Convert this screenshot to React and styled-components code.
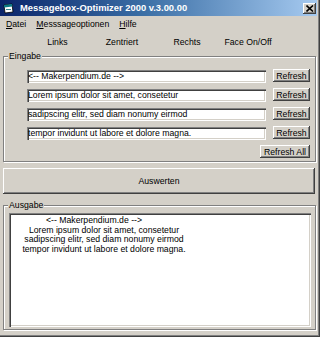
import { createGlobalStyle, styled } from "styled-components";

const GlobalStyle = createGlobalStyle`
  html, body {
    margin: 0;
    padding: 0;
    background: #d4d0c8;
  }
  body {
    font-family: "Liberation Sans", Arial, sans-serif;
    font-size: 8.7px;
    color: #000;
  }
`;

const Window = styled.div`
  position: relative;
  display: flex;
  flex-direction: column;
  box-sizing: border-box;
  width: 320px;
  height: 337px;
  padding: 0 3px 6px 0;
  background: #d4d0c8;
  box-shadow: inset -1px -1px 0 #404040, inset -2px -2px 0 #808080;
`;

const TitleBar = styled.div`
  display: flex;
  align-items: center;
  height: 16px;
  padding: 0 1px 0 3px;
  background: linear-gradient(to right, #0a246a 0%, #3a6ea5 45%, #a6caf0 100%);
`;

const Title = styled.span`
  flex: 1;
  margin-left: 5px;
  color: #fff;
  font-size: 9.4px;
  font-weight: 700;
  line-height: 16px;
  white-space: nowrap;
`;

const CloseButton = styled.div`
  display: flex;
  align-items: center;
  justify-content: center;
  box-sizing: border-box;
  width: 13px;
  height: 11px;
  background: #d4d0c8;
  box-shadow: inset -1px -1px 0 #404040, inset 1px 1px 0 #fff,
    inset -2px -2px 0 #808080;
`;

const MenuBar = styled.div`
  display: flex;
  height: 14px;
  margin-top: 1px;
  padding-left: 1px;
  align-items: center;
`;

const MenuItem = styled.span`
  padding: 0 5px;
  line-height: 14px;
  white-space: nowrap;
`;

const Body = styled.div`
  display: flex;
  flex: 1;
  flex-direction: column;
  padding-left: 3px;
`;

const AlignRow = styled.div`
  display: flex;
  height: 20px;
  margin-top: 1px;
  padding-left: 23px;
  align-items: center;
`;

const AlignOption = styled.span`
  width: ${(p) => p.$w}px;
  text-align: center;
  white-space: nowrap;
`;

const GroupBox = styled.div`
  position: relative;
  display: flex;
  flex-direction: column;
  box-sizing: border-box;
  border: 1px solid #808080;
  box-shadow: 1px 1px 0 #fff, inset 1px 1px 0 #fff;
  margin-top: ${(p) => p.$top}px;
  margin-right: 1px;
  padding: ${(p) => p.$pad};
  ${(p) => p.$grow && "flex: 1; margin-bottom: 1px;"}
`;

const Legend = styled.span`
  position: absolute;
  top: -6px;
  left: 4px;
  padding: 0 1px;
  background: #d4d0c8;
  line-height: 11px;
`;

const InputGrid = styled.div`
  display: grid;
  grid-template-columns: 1fr 37px;
  grid-auto-rows: 13px;
  column-gap: 7px;
  row-gap: 6px;
  align-items: center;
`;

const TextField = styled.div`
  box-sizing: border-box;
  height: 13px;
  margin-top: 2px;
  padding-left: 1px;
  background: #fff;
  box-shadow: inset 1px 1px 0 #808080, inset 2px 2px 0 #404040,
    inset -1px -1px 0 #fff, inset -2px -2px 0 #d4d0c8;
  padding-top: 2px;
  line-height: 9px;
  white-space: nowrap;
  overflow: hidden;
`;

const Button = styled.div`
  display: flex;
  align-items: center;
  justify-content: center;
  box-sizing: border-box;
  height: ${(p) => p.$h || 13}px;
  width: ${(p) => (p.$w ? `${p.$w}px` : "auto")};
  background: #d4d0c8;
  box-shadow: inset -1px -1px 0 #404040, inset 1px 1px 0 #fff,
    inset -2px -2px 0 #808080;
  white-space: nowrap;
  ${(p) => p.$span && "grid-column: 1 / -1; justify-self: end;"}
`;

const BigButton = styled(Button)`
  margin: 6px 2px 0 0;
`;

const OutputBox = styled.div`
  flex: 1;
  box-sizing: border-box;
  padding: 3px 2px 2px 7px;
  background: #fff;
  box-shadow: inset 1px 1px 0 #808080, inset 2px 2px 0 #404040,
    inset -1px -1px 0 #fff, inset -2px -2px 0 #d4d0c8;
`;

const OutputText = styled.div`
  width: 176px;
  text-align: center;
  line-height: 9.6px;
`;

const OutputLine = styled.div`
  padding-right: ${(p) => p.$shift || 0}px;
  white-space: nowrap;
`;

const AppIcon = () => (
  <svg width="12" height="11" viewBox="0 0 12 11">
    <path d="M1 2 L9 1 L10 9 L2 10 Z" fill="#fff" stroke="#000" strokeWidth="0.8" />
    <path d="M1 2 L9 1 L9.3 3.4 L1.3 4.4 Z" fill="#0a7a86" />
    <rect x="3" y="6" width="5" height="1" fill="#3a8a96" />
  </svg>
);

const CloseIcon = () => (
  <svg width="8" height="7" viewBox="0 0 8 7">
    <path d="M0.5 0.5 L7 6.5 M7 0.5 L0.5 6.5" stroke="#000" strokeWidth="1.6" />
  </svg>
);

const inputs = [
  "<-- Makerpendium.de -->",
  "Lorem ipsum dolor sit amet, consetetur",
  "sadipscing elitr, sed diam nonumy eirmod",
  "tempor invidunt ut labore et dolore magna.",
];

const alignOptions = [
  { label: "Links", w: 63 },
  { label: "Zentriert", w: 66 },
  { label: "Rechts", w: 64 },
  { label: "Face On/Off", w: 58 },
];

export default function App() {
  return (
    <>
      <GlobalStyle />
      <Window>
        <TitleBar>
          <AppIcon />
          <Title>Messagebox-Optimizer 2000 v.3.00.00</Title>
          <CloseButton>
            <CloseIcon />
          </CloseButton>
        </TitleBar>
        <MenuBar>
          <MenuItem>
            <u>D</u>atei
          </MenuItem>
          <MenuItem>
            <u>M</u>esssageoptionen
          </MenuItem>
          <MenuItem>
            <u>H</u>ilfe
          </MenuItem>
        </MenuBar>
        <Body>
          <AlignRow>
            {alignOptions.map((o) => (
              <AlignOption key={o.label} $w={o.w}>
                {o.label}
              </AlignOption>
            ))}
          </AlignRow>
          <GroupBox $top={4} $pad="12px 5px 3px 23px">
            <Legend>Eingabe</Legend>
            <InputGrid>
              {inputs.map((text) => [
                <TextField key={text}>{text}</TextField>,
                <Button key={text + "-btn"}>Refresh</Button>,
              ])}
              <Button $w={50} $span>
                Refresh All
              </Button>
            </InputGrid>
          </GroupBox>
          <BigButton $h={26}>Auswerten</BigButton>
          <GroupBox $top={11} $pad="7px 4px 2px 5px" $grow>
            <Legend>Ausgabe</Legend>
            <OutputBox>
              <OutputText>
                {inputs.map((text, i) => (
                  <OutputLine key={text} $shift={i === 0 ? 20 : 0}>
                    {text}
                  </OutputLine>
                ))}
              </OutputText>
            </OutputBox>
          </GroupBox>
        </Body>
      </Window>
    </>
  );
}
